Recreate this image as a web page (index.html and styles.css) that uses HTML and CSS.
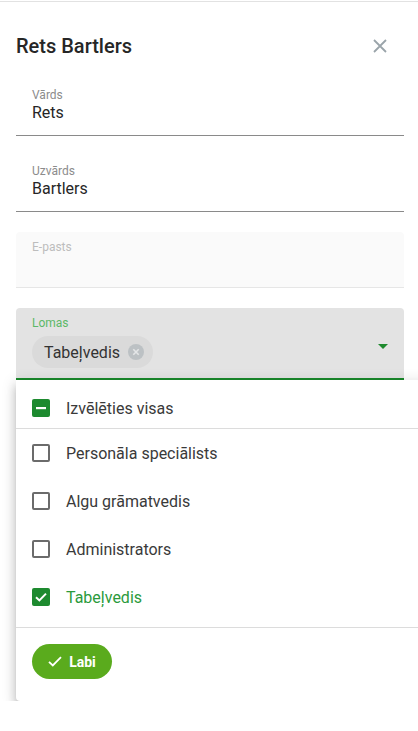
FILE: index.html
```html
<!DOCTYPE html>
<html lang="lv">
<head>
<meta charset="utf-8">
<title>Rets Bartlers</title>
<link rel="stylesheet" href="styles.css">
</head>
<body>
<div class="topline"></div>
<div class="page">
  <div class="header">
    <h1 class="title">Rets Bartlers</h1>
    <button class="close" aria-label="Aizvērt">
      <svg width="14" height="14" viewBox="0 0 14 14"><path d="M1 1L13 13M13 1L1 13" stroke="#9aa4aa" stroke-width="1.8" fill="none"/></svg>
    </button>
  </div>

  <div class="fields">
    <div class="field">
      <div class="label">Vārds</div>
      <div class="value">Rets</div>
    </div>
    <div class="field">
      <div class="label">Uzvārds</div>
      <div class="value">Bartlers</div>
    </div>
    <div class="field disabled">
      <div class="label">E-pasts</div>
      <div class="value"></div>
    </div>
    <div class="select-wrap">
      <div class="field select">
        <div class="select-main">
          <div class="label green">Lomas</div>
          <div class="chip">
            <span>Tabeļvedis</span>
            <svg class="chip-x" width="16" height="16" viewBox="0 0 16 16"><circle cx="8" cy="8" r="8" fill="#bcc1c4"/><path d="M5.3 5.3L10.7 10.7M10.7 5.3L5.3 10.7" stroke="#e4e6e7" stroke-width="1.6"/></svg>
          </div>
        </div>
        <svg class="arrow" width="10" height="5" viewBox="0 0 10 5"><path d="M0 0H10L5 5Z" fill="#1e8a2e"/></svg>
      </div>

      <div class="panel">
        <div class="opt all">
          <span class="cb checked"><svg width="18" height="18" viewBox="0 0 18 18"><rect x="4" y="8" width="10" height="2.2" fill="#fff"/></svg></span>
          <span class="opt-text">Izvēlēties visas</span>
        </div>
        <div class="list">
          <div class="opt"><span class="cb"></span><span class="opt-text">Personāla speciālists</span></div>
          <div class="opt"><span class="cb"></span><span class="opt-text">Algu grāmatvedis</span></div>
          <div class="opt"><span class="cb"></span><span class="opt-text">Administrators</span></div>
          <div class="opt selected"><span class="cb checked"><svg width="18" height="18" viewBox="0 0 18 18"><path d="M4 9.2L7.4 12.4L14 5.6" stroke="#fff" stroke-width="2" fill="none"/></svg></span><span class="opt-text">Tabeļvedis</span></div>
        </div>
        <div class="actions">
          <button class="ok">
            <svg width="14" height="11" viewBox="0 0 14 11"><path d="M1 5.8L4.8 9.5L13 1.2" stroke="#fff" stroke-width="1.8" fill="none"/></svg>
            <span>Labi</span>
          </button>
        </div>
      </div>
    </div>
  </div>
</div>
</body>
</html>
```

FILE: styles.css
```css
html, body {
  margin: 0;
  padding: 0;
  background: #fff;
  overflow: hidden;
  font-family: Roboto, "Liberation Sans", Arial, sans-serif;
  color: #212121;
}

.topline {
  height: 1px;
  border-bottom: 1px solid #e2e2e2;
}

.page {
  padding: 0 14px 0 16px;
}

.header {
  display: flex;
  align-items: center;
  justify-content: space-between;
  padding: 32px 0 22px 0;
}

.title {
  margin: 0;
  font-size: 20px;
  line-height: 24px;
  font-weight: 500;
  color: #262626;
}

.close {
  width: 24px;
  height: 24px;
  margin-right: 12px;
  padding: 0;
  border: 0;
  background: none;
  display: flex;
  align-items: center;
  justify-content: center;
}

.fields {
  display: flex;
  flex-direction: column;
  gap: 20px;
}

.field {
  height: 56px;
  box-sizing: border-box;
  padding: 7px 16px 0 16px;
  border-bottom: 1px solid #8a8a8a;
}

.label {
  font-size: 12px;
  line-height: 16px;
  color: #8c8c8c;
}

.label.green {
  color: #5cb868;
}

.value {
  font-size: 16px;
  line-height: 20px;
  color: #262626;
}

.field.disabled {
  background: #fafafa;
  border-bottom-color: #e6e6e6;
  border-radius: 4px 4px 0 0;
}

.field.disabled .label {
  color: #bdbdbd;
}

.select-wrap {
  display: flex;
  flex-direction: column;
}

.field.select {
  height: 72px;
  background: #e3e3e3;
  border-radius: 4px 4px 0 0;
  border-bottom: 2px solid #1a8a2c;
  display: flex;
  align-items: stretch;
}

.select-main {
  flex: 1;
  display: flex;
  flex-direction: column;
  align-items: flex-start;
}

.chip {
  margin-top: 5px;
  height: 32px;
  box-sizing: border-box;
  padding: 0 9px 0 12px;
  border-radius: 16px;
  background: #dadada;
  display: flex;
  align-items: center;
  gap: 8px;
  font-size: 16px;
  color: #333;
}

.arrow {
  align-self: center;
}

.panel {
  width: 412px;
  background: #fff;
  border-radius: 0 0 4px 4px;
  box-shadow: 0 5px 5px -3px rgba(0,0,0,.2), 0 8px 10px 1px rgba(0,0,0,.14), 0 3px 14px 2px rgba(0,0,0,.12);
  padding-top: 8px;
}

.opt {
  height: 48px;
  display: flex;
  align-items: center;
  gap: 16px;
  padding-left: 16px;
  font-size: 16px;
  color: #3a3a3a;
}

.opt.all {
  height: 40px;
  border-bottom: 1px solid #dcdcdc;
}

.list {
  padding-bottom: 6px;
  border-bottom: 1px solid #dcdcdc;
}

.cb {
  width: 18px;
  height: 18px;
  box-sizing: border-box;
  border: 2px solid #6b6b6b;
  border-radius: 2px;
  display: flex;
  align-items: center;
  justify-content: center;
  flex: none;
}

.cb.checked {
  border: 0;
  background: #1d8a2f;
}

.opt.selected .opt-text {
  color: #2b9a3c;
}

.actions {
  padding: 16px 16px 22px 16px;
}

.ok {
  height: 35px;
  width: 80px;
  border: 0;
  border-radius: 18px;
  background: #5aab1d;
  color: #fff;
  font-family: Roboto, "Liberation Sans", Arial, sans-serif;
  font-size: 14px;
  font-weight: 700;
  display: flex;
  align-items: center;
  justify-content: center;
  gap: 7px;
  padding: 0;
}
```
